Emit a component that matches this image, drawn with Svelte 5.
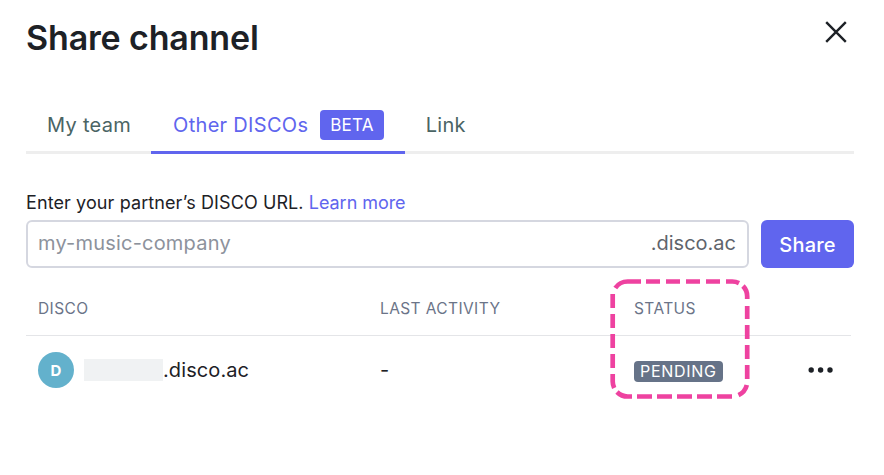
<script lang="ts">
	const tabs = [
		{ label: 'My team', active: false, badge: '' },
		{ label: 'Other DISCOs', active: true, badge: 'BETA' },
		{ label: 'Link', active: false, badge: '' }
	];

	// hand-placed dashes so the corners stay long arcs
	const dashes = [
		'M5.3 9A15 15 0 0 1 17.7 2.5H31',
		'M36 2.5H50M56 2.5H70M76 2.5H90M96 2.5H110',
		'M116 2.5H122.2A15 15 0 0 1 129 4.1',
		'M133 7A15 15 0 0 1 137.2 17.5V20',
		'M137.2 27V40M137.2 46V60M137.2 66V80M137.2 86V100',
		'M136.8 106A15 15 0 0 1 128.5 116.1',
		'M122 117.5H107M102 117.5H87M82 117.5H67M62 117.5H47M42 117.5H27',
		'M22 117.5H17.7A15 15 0 0 1 7 113',
		'M4.2 109A15 15 0 0 1 2.7 102.5V95',
		'M2.7 89V75M2.7 69V55M2.7 49V35M2.7 29V15'
	].join('');
</script>

<div class="modal">
	<header>
		<h1>Share channel</h1>
		<button class="close" aria-label="Close">
			<svg width="22" height="22" viewBox="0 0 22 22" fill="none" stroke="#1d2126" stroke-width="2.4">
				<path d="M1.2 1.2 L20.8 20.8 M20.8 1.2 L1.2 20.8" />
			</svg>
		</button>
	</header>

	<nav class="tabs">
		{#each tabs as tab}
			<div class="tab" class:active={tab.active}>
				{tab.label}
				{#if tab.badge}<span class="badge">{tab.badge}</span>{/if}
			</div>
		{/each}
	</nav>

	<p class="hint">Enter your partner’s DISCO URL. <span class="link">Learn more</span></p>
	<div class="form">
		<div class="field">
			<span class="placeholder">my-music-company</span>
			<span class="suffix">.disco.ac</span>
		</div>
		<button class="share">Share</button>
	</div>

	<div class="table">
		<div class="row head">
			<div>DISCO</div>
			<div>LAST ACTIVITY</div>
			<div class="status-col">
				STATUS
				<svg class="highlight" width="140" height="120" viewBox="0 0 140 120" fill="none">
					<path d={dashes} stroke="#ee42a0" stroke-width="4.7" />
				</svg>
			</div>
			<div></div>
		</div>
		<div class="row body">
			<div class="name">
				<span class="avatar">D</span>
				<span class="blur"></span><span class="domain">.disco.ac</span>
			</div>
			<div>-</div>
			<div><span class="pill">PENDING</span></div>
			<div class="more">
				<svg width="26" height="6" viewBox="0 0 26 6" fill="#1d2126">
					<circle cx="3.2" cy="3" r="2.7" />
					<circle cx="12.6" cy="3" r="2.7" />
					<circle cx="22" cy="3" r="2.7" />
				</svg>
			</div>
		</div>
	</div>
</div>

<style>
	:global(body) {
		background: #fff;
		font-family: Inter, 'Liberation Sans', sans-serif;
	}
	.modal {
		width: 884px;
		height: 475px;
		box-sizing: border-box;
		padding: 16px 30px 0 26px;
		overflow: hidden;
	}
	header {
		display: flex;
		justify-content: space-between;
		align-items: flex-start;
		height: 72px;
	}
	h1 {
		margin: 0;
		font-size: 34px;
		line-height: 44px;
		font-weight: 600;
		color: #1d2126;
		letter-spacing: -0.15px;
	}
	.close {
		background: none;
		border: none;
		padding: 0;
		margin: 5px 7px 0 0;
		width: 22px;
		height: 22px;
	}
	.tabs {
		display: flex;
		border-bottom: 3px solid #eeeeee;
		height: 66px;
		box-sizing: border-box;
		padding-top: 20px;
	}
	.tab {
		display: flex;
		align-items: center;
		gap: 12px;
		padding: 0 21px 13px;
		height: 46px;
		margin-bottom: -3px;
		box-sizing: border-box;
		font-size: 20px;
		letter-spacing: 0.3px;
		color: #4a6464;
	}
	.tab.active {
		color: #6065ee;
		border-bottom: 3px solid #6065ee;
		margin-left: -1px;
		padding-left: 22px;
		padding-bottom: 10px;
	}
	.badge {
		background: #6065ee;
		color: #fff;
		font-size: 17px;
		line-height: 30px;
		letter-spacing: 0.2px;
		padding: 0 10px;
		border-radius: 4px;
	}
	.hint {
		margin: 38px 0 0;
		font-size: 18px;
		line-height: 22px;
		letter-spacing: 0.1px;
		color: #1d2126;
	}
	.link {
		color: #6065ee;
		letter-spacing: -0.05px;
	}
	.form {
		display: flex;
		gap: 12px;
		margin-top: 6px;
	}
	.field {
		flex: 1;
		height: 48px;
		box-sizing: border-box;
		border: 2px solid #d5d7e0;
		border-radius: 6px;
		display: flex;
		align-items: center;
		justify-content: space-between;
		padding: 0 11px 2px 10px;
		font-size: 20px;
	}
	.placeholder {
		color: #8d929c;
		letter-spacing: 0.2px;
	}
	.suffix {
		color: #5f646c;
	}
	.share {
		width: 93px;
		height: 48px;
		border: none;
		border-radius: 6px;
		padding: 2px 0 0;
		background: #6065ee;
		color: #fff;
		font-family: inherit;
		font-size: 20px;
		font-weight: 500;
		letter-spacing: 0.2px;
	}
	.table {
		width: 825px;
	}
	.row {
		display: grid;
		grid-template-columns: 342px 254px 1fr 43px;
		padding-left: 12px;
		align-items: center;
	}
	.head {
		height: 68px;
		padding-top: 14px;
		box-sizing: border-box;
		border-bottom: 1px solid #e4e5e8;
		font-size: 15.5px;
		letter-spacing: 0.4px;
		color: #6b7488;
	}
	.status-col {
		position: relative;
	}
	.highlight {
		position: absolute;
		left: -24px;
		top: -20px;
	}
	.body {
		height: 68px;
		font-size: 20px;
		color: #1d2126;
	}
	.name {
		display: flex;
		align-items: center;
	}
	.domain {
		letter-spacing: 0.1px;
	}
	.avatar {
		width: 36px;
		height: 36px;
		border-radius: 50%;
		background: #63b1cc;
		color: #fff;
		font-size: 15px;
		font-weight: 700;
		display: flex;
		align-items: center;
		justify-content: center;
		margin-right: 10px;
	}
	.blur {
		width: 79px;
		height: 22px;
		background: #f0f2f3;
	}
	.pill {
		display: inline-block;
		background: #667388;
		color: #fff;
		font-size: 16px;
		letter-spacing: 0.7px;
		line-height: 21px;
		padding: 0 6px;
		border-radius: 4px;
	}
	.more {
		display: flex;
	}
</style>
